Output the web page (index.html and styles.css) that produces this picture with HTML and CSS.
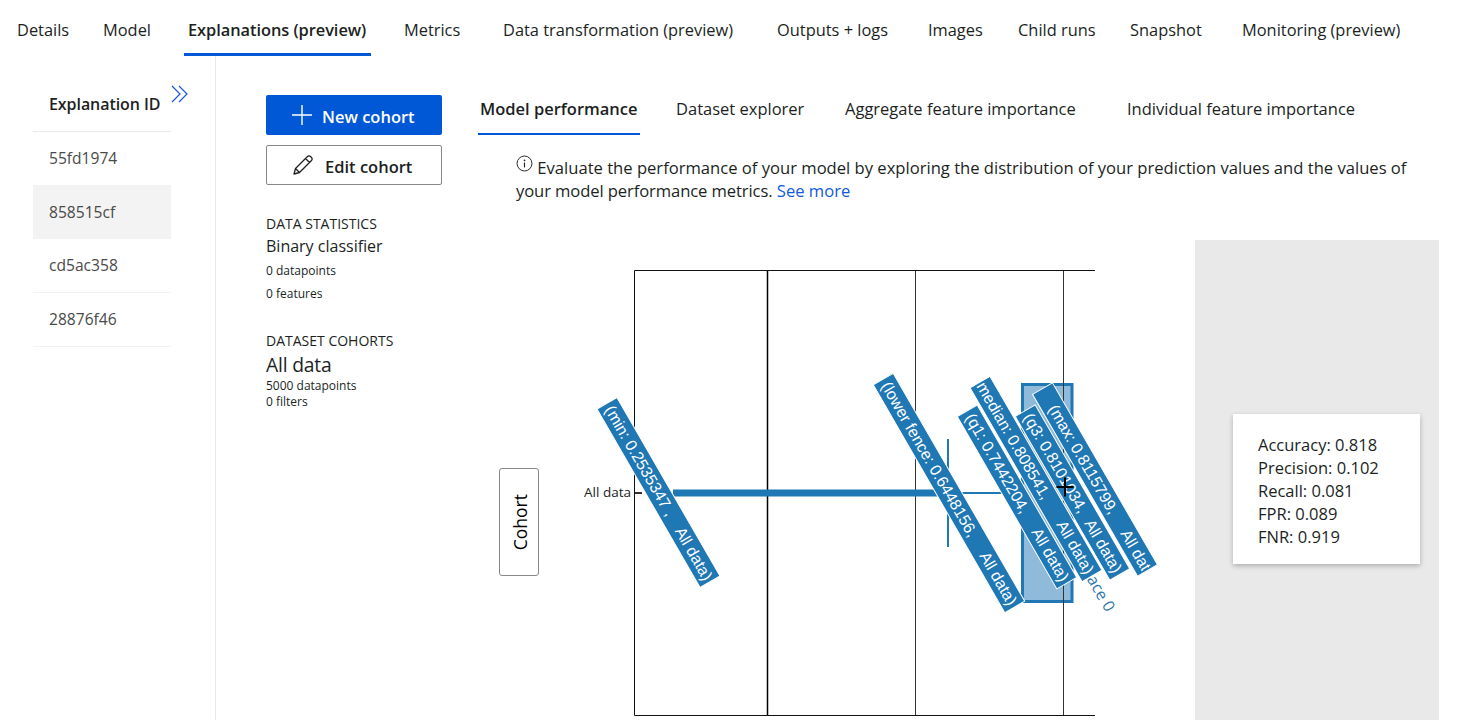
FILE: index.html
```
<!DOCTYPE html>
<html lang="en">
<head>
<meta charset="utf-8">
<title>Explanations (preview)</title>
<link rel="stylesheet" href="styles.css">
</head>
<body>
<nav class="tabs">
  <span class="tab">Details</span>
  <span class="tab">Model</span>
  <span class="tab tab-active">Explanations (preview)</span>
  <span class="tab">Metrics</span>
  <span class="tab">Data transformation (preview)</span>
  <span class="tab">Outputs + logs</span>
  <span class="tab">Images</span>
  <span class="tab">Child runs</span>
  <span class="tab">Snapshot</span>
  <span class="tab">Monitoring (preview)</span>
</nav>
<main class="main">
  <aside class="sidebar">
    <div class="list">
      <div class="list-head">Explanation ID</div>
      <div class="list-row">55fd1974</div>
      <div class="list-row list-row-selected">858515cf</div>
      <div class="list-row">cd5ac358</div>
      <div class="list-row">28876f46</div>
    </div>
    <svg class="chevrons" viewBox="0 0 18 18" width="18" height="18"><path d="M1 1l8 8-8 8M8 1l8 8-8 8" fill="none" stroke="#1a56d6" stroke-width="1.2"/></svg>
  </aside>
  <section class="cohorts">
    <button class="btn btn-primary"><svg class="btn-icon" viewBox="0 0 22 22" width="22" height="22"><path d="M11 1v20M1 11h20" stroke="#fff" stroke-width="1.4" fill="none"/></svg>New cohort</button>
    <button class="btn btn-outline"><svg class="btn-icon btn-icon-edit" viewBox="0 0 22 22" width="22" height="22"><path d="M2 20l1.500-5.500L15.500 2.500a2.100 2.100 0 0 1 3 0l1 1a2.100 2.100 0 0 1 0 3L7.500 18.500zM3.500 14.500l4 4M13.500 4.500l4 4" stroke="#201f1e" stroke-width="1.3" fill="none" stroke-linejoin="round"/></svg>Edit cohort</button>
    <div class="stat-title stat-first">DATA STATISTICS</div>
    <div class="stat-main">Binary classifier</div>
    <div class="stat-small stat-gap-first">0 datapoints</div>
    <div class="stat-small stat-gap">0 features</div>
    <div class="stat-title stat-second">DATASET COHORTS</div>
    <div class="stat-large">All data</div>
    <div class="stat-small">5000 datapoints</div>
    <div class="stat-small">0 filters</div>
  </section>
  <section class="analysis">
    <nav class="subtabs">
      <span class="subtab subtab-active">Model performance</span>
      <span class="subtab">Dataset explorer</span>
      <span class="subtab">Aggregate feature importance</span>
      <span class="subtab">Individual feature importance</span>
    </nav>
    <p class="intro"><svg class="info" viewBox="0 0 18 18" width="17" height="17"><circle cx="9" cy="9" r="7.900" fill="none" stroke="#201f1e" stroke-width="1"/><path d="M9 8v5.200" stroke="#201f1e" stroke-width="1.200"/><circle cx="9" cy="5.600" r=".9" fill="#201f1e"/></svg> Evaluate the performance of your model by exploring the distribution of your prediction values and the values of<br><span class="intro-tight">your model performance metrics.</span> <a class="link" href="#">See more</a></p>
    <div class="chart-row">
      <button class="axis-btn"><span class="axis-btn-text">Cohort</span></button>
      <svg class="plot" viewBox="539 240 656 480" width="656" height="480">
        <text class="tick" x="631" y="497" text-anchor="end">All data</text>
        <path class="tick-mark" d="M634 493h8"/>
        <rect class="box" x="1022.500" y="384.500" width="49.500" height="217"/>
        <path class="grid" d="M915.500 270v445M1063.500 270v445"/>
        <path class="grid-strong" d="M767.500 270v445"/>
        <path class="frame" d="M1095 270.500H634.500V715.500H1095"/>
        <path class="whisker-thick" d="M673 493H948"/>
        <path class="whisker" d="M948 493H1022M948 439v108"/>
        <text class="trace" transform="translate(1106 613) rotate(60)" text-anchor="end">trace 0</text>
        <g transform="translate(658.500 492.500) rotate(60)">
          <rect class="hover" x="-103" y="-11.500" width="206" height="23"/>
          <text class="hover-text" x="-99" y="5.500">(min: 0.2535347 ,</text>
          <text class="hover-text" x="100" y="5.500" text-anchor="end">All data)</text>
        </g>
        <g transform="translate(949 493) rotate(60)">
          <rect class="hover" x="-131.500" y="-11.500" width="263" height="23"/>
          <text class="hover-text" x="-127" y="5.500">(lower fence: 0.6448156,</text>
          <text class="hover-text" x="128" y="5.500" text-anchor="end">All data)</text>
        </g>
        <g transform="translate(1017 497) rotate(60)">
          <rect class="hover" x="-99.500" y="-11.500" width="199" height="23"/>
          <text class="hover-text" x="-95" y="5.500">(q1: 0.7442204,</text>
          <text class="hover-text" x="96" y="5.500" text-anchor="end">All data)</text>
        </g>
        <clipPath id="median-clip"><rect x="-111" y="-11.500" width="222" height="23"/></clipPath>
        <g transform="translate(1036 479) rotate(60)">
          <rect class="hover" x="-112" y="-11.500" width="224" height="23"/>
          <g clip-path="url(#median-clip)">
            <text class="hover-text" x="-116" y="5.500">(median: 0.808541,</text>
            <text class="hover-text" x="108" y="5.500" text-anchor="end">All data)</text>
          </g>
        </g>
        <g transform="translate(1072.500 492.500) rotate(60)">
          <rect class="hover" x="-94.500" y="-11.500" width="189" height="23"/>
          <text class="hover-text" x="-90" y="5.500">(q3: 0.8101034,</text>
          <text class="hover-text" x="91" y="5.500" text-anchor="end">All data)</text>
        </g>
        <clipPath id="max-clip"><rect x="-105" y="-11.500" width="208" height="23"/></clipPath>
        <g transform="translate(1095 479.500) rotate(60)">
          <rect class="hover" x="-105" y="-11.500" width="210" height="23"/>
          <g clip-path="url(#max-clip)">
            <text class="hover-text" x="-85" y="5.500">(max: 0.8115799,</text>
            <text class="hover-text" x="118" y="5.500" text-anchor="end">All data)</text>
          </g>
        </g>
        <path class="cursor" d="M1056.500 487h17M1065 477.500v19"/>
      </svg>
      <div class="metrics-panel">
        <div class="metrics-card">
          <div>Accuracy: 0.818</div>
          <div>Precision: 0.102</div>
          <div>Recall: 0.081</div>
          <div>FPR: 0.089</div>
          <div>FNR: 0.919</div>
        </div>
      </div>
    </div>
  </section>
</main>
</body>
</html>
```
FILE: styles.css
```
* { box-sizing: border-box; }
html, body { margin: 0; padding: 0; height: 720px; overflow: hidden; background: #fff; }
body { font-family: "Open Sans", "Noto Sans", sans-serif; color: #201f1e; }

.tabs {
  display: grid;
  grid-template-columns: 86px 85px 216px 99px 274px 151px 90px 112px 112px auto;
  height: 56px;
  padding-left: 17px;
  font-size: 16.400px;
}
.tab { position: relative; line-height: 60px; white-space: nowrap; }
.tab-active { font-weight: 600; letter-spacing: -0.05px; }
.tab-active::after {
  content: "";
  position: absolute;
  left: -4px;
  top: 53px;
  width: 187px;
  height: 3px;
  background: #0058d6;
}

.main { display: flex; height: 664px; }

.sidebar {
  position: relative;
  flex: 0 0 216px;
  border-right: 1px solid #e8e8e8;
  padding: 21px 0 0 33px;
}
.list { width: 138px; }
.list-head {
  height: 55px;
  line-height: 54px;
  padding-left: 16px;
  font-size: 16px;
  font-weight: 600;
  letter-spacing: -0.07px;
  border-bottom: 1px solid #eaeaea;
  white-space: nowrap;
}
.list-row {
  height: 53.700px;
  line-height: 52px;
  padding-left: 16px;
  font-size: 15.600px;
  color: #4a4a4a;
  border-bottom: 1px solid #f2f2f2;
}
.list-row-selected { background: #f3f3f3; border-bottom-color: #f3f3f3; }
.chevrons { position: absolute; left: 171px; top: 29px; }

.cohorts { flex: 0 0 176px; margin-left: 50px; padding-top: 39px; }
.btn {
  display: flex;
  align-items: center;
  width: 176px;
  height: 40px;
  border-radius: 2px;
  font-family: inherit;
  font-size: 16.500px;
  font-weight: 600;
  padding: 2px 0 0 25px;
}
.btn-icon { margin: -2px 9px 0 0; flex: none; }
.btn-icon-edit { margin-right: 11px; }
.btn-primary { background: #0058d6; border: 0; color: #fff; }
.btn-outline { background: #fff; border: 1px solid #8a8886; color: #201f1e; margin-top: 10px; }

.stat-title { font-size: 14px; line-height: 18px; white-space: nowrap; }
.stat-first { margin-top: 30px; }
.stat-second { margin-top: 30px; }
.stat-main { font-size: 16px; line-height: 24px; margin-top: 1px; }
.stat-small { font-size: 12px; line-height: 16px; white-space: nowrap; }
.stat-gap-first { margin-top: 5px; }
.stat-gap { margin-top: 7px; }
.stat-large { font-size: 19.300px; line-height: 26px; letter-spacing: -0.2px; margin-top: 2px; }

.analysis { flex: 1 1 auto; margin-left: 36px; min-width: 0; }
.subtabs {
  display: grid;
  grid-template-columns: 196px 169px 282px auto;
  padding: 31px 0 0 2px;
  height: 79px;
  font-size: 16.500px;
}
.subtab { position: relative; line-height: 44px; white-space: nowrap; }
.subtab-active { font-weight: 600; }
.subtab-active::after {
  content: "";
  position: absolute;
  left: -2px;
  top: 46px;
  width: 162px;
  height: 2px;
  background: #0058d6;
}
.intro {
  height: 46px;
  margin: 20px 0 0 38px;
  font-size: 16.600px;
  line-height: 23px;
  white-space: nowrap;
}
.intro-tight { letter-spacing: -0.1px; }
.info { vertical-align: 2px; }
.link { color: #0f5bd9; text-decoration: none; }

.chart-row { display: flex; margin-top: 39px; height: 480px; }
.axis-btn {
  flex: 0 0 40px;
  height: 108px;
  margin: 228px 0 0 21px;
  background: #fff;
  border: 1px solid #8a8886;
  border-radius: 3px;
  padding: 0 0 0 2px;
  font-family: inherit;
  color: #000;
  display: flex;
  align-items: center;
  justify-content: center;
}
.axis-btn-text { writing-mode: vertical-rl; transform: rotate(180deg); font-size: 17.500px; font-weight: 500; }
.plot { flex: 0 0 656px; display: block; overflow: visible; }
.tick { font-size: 13.500px; fill: #201f1e; }
.tick-mark { stroke: #333; stroke-width: 2; }
.grid { stroke: #333; stroke-width: 1; fill: none; }
.grid-strong { stroke: #000; stroke-width: 1.500; fill: none; }
.frame { stroke: #111; stroke-width: 1; fill: none; }
.box { fill: #8fbad9; stroke: #1f77b4; stroke-width: 3; }
.whisker-thick { stroke: #1f77b4; stroke-width: 7; fill: none; }
.whisker { stroke: #1f77b4; stroke-width: 2; fill: none; }
.trace { font-size: 16px; fill: #2f76b0; }
.hover { fill: #1f77b4; stroke: #fff; stroke-width: 1; }
.hover-text { font-family: "Liberation Sans", Arial, sans-serif; font-size: 16px; fill: #fff; }
.cursor { stroke: #000; stroke-width: 2; fill: none; }

.metrics-panel {
  flex: 0 0 244px;
  height: 480px;
  background: #e9e9e9;
  padding: 174px 0 0 38px;
}
.metrics-card {
  width: 187px;
  height: 150px;
  padding: 19px 0 0 25px;
  background: #fff;
  box-shadow: 0 2px 5px rgba(0, 0, 0, 0.25);
  font-size: 16.500px;
  line-height: 23px;
  white-space: nowrap;
}
```
